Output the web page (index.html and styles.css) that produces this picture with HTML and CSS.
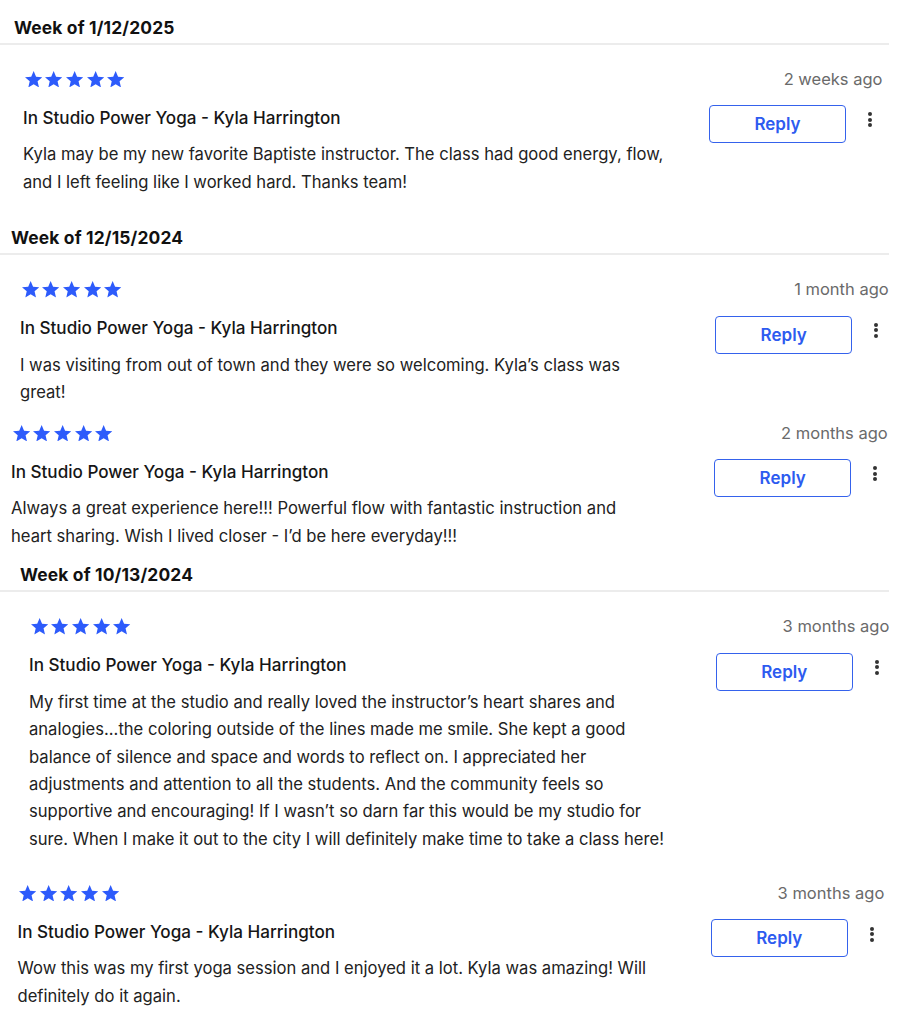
FILE: index.html
```html
<!DOCTYPE html>
<html lang="en">
<head>
<meta charset="utf-8">
<title>Reviews</title>
<link rel="stylesheet" href="styles.css">
</head>
<body>
<svg width="0" height="0" class="defs" aria-hidden="true">
  <symbol id="star" viewBox="2 2 20 19.27"><path d="M12 17.27L18.18 21l-1.64-7.03L22 9.24l-7.19-.61L12 2 9.19 8.63 2 9.24l5.46 4.73L5.82 21z"/></symbol>
</svg>
<main class="page">
  <section class="week wk1">
    <h2 class="week-head">Week of 1/12/2025</h2>
    <article class="review r1">
      <div class="review-main">
        <div class="stars"><svg><use href="#star"/></svg><svg><use href="#star"/></svg><svg><use href="#star"/></svg><svg><use href="#star"/></svg><svg><use href="#star"/></svg></div>
        <h3 class="review-title">In Studio Power Yoga - Kyla Harrington</h3>
        <p class="review-body">Kyla may be my new favorite Baptiste instructor. The class had good energy, flow, and I left feeling like I worked hard. Thanks team!</p>
      </div>
      <div class="review-side">
        <div class="time">2 weeks ago</div>
        <div class="actions"><button class="reply">Reply</button><span class="kebab"><i></i><i></i><i></i></span></div>
      </div>
    </article>
  </section>

  <section class="week wk2">
    <h2 class="week-head">Week of 12/15/2024</h2>
    <article class="review r2">
      <div class="review-main">
        <div class="stars"><svg><use href="#star"/></svg><svg><use href="#star"/></svg><svg><use href="#star"/></svg><svg><use href="#star"/></svg><svg><use href="#star"/></svg></div>
        <h3 class="review-title">In Studio Power Yoga - Kyla Harrington</h3>
        <p class="review-body">I was visiting from out of town and they were so welcoming. Kyla’s class was great!</p>
      </div>
      <div class="review-side">
        <div class="time">1 month ago</div>
        <div class="actions"><button class="reply">Reply</button><span class="kebab"><i></i><i></i><i></i></span></div>
      </div>
    </article>
    <article class="review r3">
      <div class="review-main">
        <div class="stars"><svg><use href="#star"/></svg><svg><use href="#star"/></svg><svg><use href="#star"/></svg><svg><use href="#star"/></svg><svg><use href="#star"/></svg></div>
        <h3 class="review-title">In Studio Power Yoga - Kyla Harrington</h3>
        <p class="review-body">Always a great experience here!!! Powerful flow with fantastic instruction and heart sharing. Wish I lived closer - I’d be here everyday!!!</p>
      </div>
      <div class="review-side">
        <div class="time">2 months ago</div>
        <div class="actions"><button class="reply">Reply</button><span class="kebab"><i></i><i></i><i></i></span></div>
      </div>
    </article>
  </section>

  <section class="week wk3">
    <h2 class="week-head">Week of 10/13/2024</h2>
    <article class="review r4">
      <div class="review-main">
        <div class="stars"><svg><use href="#star"/></svg><svg><use href="#star"/></svg><svg><use href="#star"/></svg><svg><use href="#star"/></svg><svg><use href="#star"/></svg></div>
        <h3 class="review-title">In Studio Power Yoga - Kyla Harrington</h3>
        <p class="review-body">My first time at the studio and really loved the instructor’s heart shares and analogies...the coloring outside of the lines made me smile. She kept a good balance of silence and space and words to reflect on. I appreciated her adjustments and attention to all the students. And the community feels so supportive and encouraging! If I wasn’t so darn far this would be my studio for sure. When I make it out to the city I will definitely make time to take a class here!</p>
      </div>
      <div class="review-side">
        <div class="time">3 months ago</div>
        <div class="actions"><button class="reply">Reply</button><span class="kebab"><i></i><i></i><i></i></span></div>
      </div>
    </article>
    <article class="review r5">
      <div class="review-main">
        <div class="stars"><svg><use href="#star"/></svg><svg><use href="#star"/></svg><svg><use href="#star"/></svg><svg><use href="#star"/></svg><svg><use href="#star"/></svg></div>
        <h3 class="review-title">In Studio Power Yoga - Kyla Harrington</h3>
        <p class="review-body">Wow this was my first yoga session and I enjoyed it a lot. Kyla was amazing! Will definitely do it again.</p>
      </div>
      <div class="review-side">
        <div class="time">3 months ago</div>
        <div class="actions"><button class="reply">Reply</button><span class="kebab"><i></i><i></i><i></i></span></div>
      </div>
    </article>
  </section>
</main>
</body>
</html>
```

FILE: styles.css
```css
* { box-sizing: border-box; }

html, body {
  margin: 0;
  padding: 0;
  background: #ffffff;
}

body {
  font-family: Inter, "Open Sans", Arial, sans-serif;
  color: #1e1e1e;
  width: 900px;
  height: 1028px;
  overflow: hidden;
}

.defs {
  position: absolute;
  width: 0;
  height: 0;
}

.page {
  width: 889px;
}

.week-head {
  margin: 0;
  font-size: 17.4px;
  font-weight: 700;
  letter-spacing: 0.15px;
  line-height: 24px;
  color: #111;
  padding-bottom: 3px;
  border-bottom: 2px solid #ececec;
}

.wk1 { padding-top: 15.5px; }
.wk1 .week-head { padding-left: 14px; }

.wk2 { margin-top: 30px; }
.wk2 .week-head { padding-left: 11px; }

.wk3 { margin-top: 13px; }
.wk3 .week-head { padding-left: 20px; }

.review {
  display: flex;
  align-items: flex-start;
  padding-top: 26px;
}

.r1 { width: 882.5px; padding-left: 23px; }
.r2 { width: 888.7px; padding-left: 20px; }
.r3 { width: 887.7px; padding-left: 11px; padding-top: 18px; }
.r4 { width: 889.3px; padding-left: 29px; }
.r5 { width: 884.3px; padding-left: 17.5px; padding-top: 31.5px; }

.review-main {
  flex: 1;
  min-width: 0;
}

.stars {
  display: flex;
  gap: 3.4px;
  height: 16.7px;
  margin-left: 1.5px;
}

.stars svg {
  width: 17.3px;
  height: 16.7px;
  fill: #2d5bfb;
}

.review-title {
  margin: 18.5px 0 0;
  font-size: 17.1px;
  font-weight: 500;
  line-height: 24px;
  color: #161616;
}

.review-body {
  margin: 11.5px 0 0;
  max-width: 644px;
  font-size: 16.6px;
  font-weight: 400;
  line-height: 27.4px;
  color: #222;
}

.review-side {
  flex: none;
  width: 174px;
  display: flex;
  flex-direction: column;
  align-items: flex-end;
}

.time {
  font-size: 16.5px;
  line-height: 17px;
  color: #6a6a6a;
  white-space: nowrap;
}

.actions {
  display: flex;
  align-items: flex-start;
  margin-top: 17.5px;
}

.reply {
  width: 137px;
  height: 38px;
  border: 1.5px solid #3562ec;
  border-radius: 4px;
  background: #fff;
  color: #2d5bf0;
  font-family: Inter, "Open Sans", Arial, sans-serif;
  font-size: 17px;
  font-weight: 600;
  padding: 0;
}

.kebab {
  width: 25px;
  margin-left: 11.5px;
  margin-top: 7.4px;
  display: flex;
  flex-direction: column;
  align-items: center;
  gap: 1.5px;
}

.kebab i {
  display: block;
  width: 4px;
  height: 4px;
  border-radius: 50%;
  background: #333;
}
```
